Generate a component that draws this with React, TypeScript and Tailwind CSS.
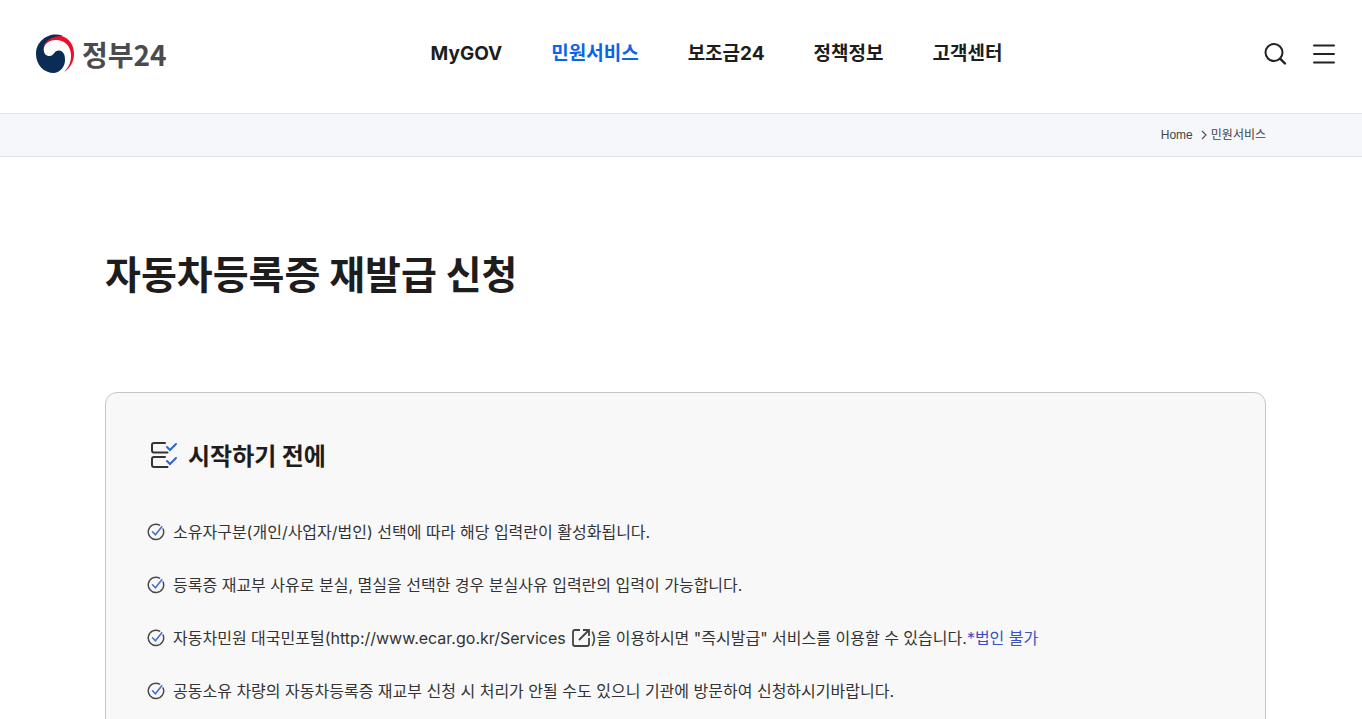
import React from 'react';

interface NavItem {
    label: string;
    active?: boolean;
}

const NAV_ITEMS: NavItem[] = [
    { label: 'MyGOV' },
    { label: '민원서비스', active: true },
    { label: '보조금24' },
    { label: '정책정보' },
    { label: '고객센터' },
];

const Logo: React.FC = () => (
    <a href="#" className="flex items-center gap-2 text-[#4b4b4f] font-['Noto_Sans_CJK_KR',sans-serif]">
        <svg width="38" height="40" viewBox="0 0 38 40" aria-hidden="true">
            <path d="M26 1.5C14 -2.5 0 6 0 20C0 31 8 39 18 39C25 38 29 32 29 26C29 20 27 17 23 16.5C18 16.5 18 22 13.5 22C9 22 7 18 8 13C9 8 16 3 27 4Z" fill="#0b2d55" />
            <path d="M7.5 15C8 7 16 2 25 2C34 4 38 12 38 20C38 28 34 34 28 38C33 33 35.5 27 35 20C34 11 28 6 20 6C14 6 9 9 7.5 15Z" fill="#e8112d" />
        </svg>
        <span className="text-[28px] leading-9 font-bold">정부24</span>
    </a>
);

const Header: React.FC = () => (
    <header className="flex items-center h-[113px] pl-9 pr-[26px] pb-[6px]">
        <Logo />
        <nav className="ml-[264px] flex items-center gap-[49px]">
            {NAV_ITEMS.map(item => (
                <a
                    key={item.label}
                    href="#"
                    className={`text-[19px] leading-7 font-bold whitespace-nowrap ${item.active ? 'text-[#0b64e8]' : 'text-[#1d1d1d]'}`}
                >
                    {item.label}
                </a>
            ))}
        </nav>
        <div className="ml-auto flex items-center gap-6">
            <button type="button" aria-label="검색">
                <svg width="24" height="24" viewBox="0 0 24 24" fill="none" stroke="#222" strokeWidth="2" strokeLinecap="round">
                    <circle cx="10" cy="10.5" r="8.5" />
                    <path d="M16.3 16.8L21 21.5" strokeWidth="2.4" />
                </svg>
            </button>
            <button type="button" aria-label="전체메뉴">
                <svg width="24" height="24" viewBox="0 0 24 24" fill="none" stroke="#222" strokeWidth="2" strokeLinecap="round">
                    <path d="M2 3.5H22M2 12H22M2 20.5H22" />
                </svg>
            </button>
        </div>
    </header>
);

const Breadcrumb: React.FC = () => (
    <nav
        aria-label="breadcrumb"
        className="flex items-center justify-end h-11 pr-24 border-y border-[#dfe2e8] bg-[#f5f7fb] text-[12px] text-[#444] font-['Liberation_Sans','Noto_Sans_CJK_KR',sans-serif]"
    >
        <a href="#">Home</a>
        <svg className="ml-2 mr-1" width="6" height="10" viewBox="0 0 6 10" fill="none" stroke="#555" strokeWidth="1.2">
            <path d="M1 1L5 5L1 9" />
        </svg>
        <a href="#">민원서비스</a>
    </nav>
);

const ChecklistIcon: React.FC = () => (
    <svg width="28" height="28" viewBox="0 0 28 28" fill="none" strokeWidth="2" strokeLinecap="round">
        <path d="M15 2H4Q2 2 2 4V9.5Q2 11.5 4 11.5H17.5" stroke="#333" />
        <path d="M15 16H4Q2 16 2 18V24Q2 26 4 26H17.5" stroke="#333" />
        <path d="M17 6L20 9L26 3M17 20L20 23L26 17" stroke="#2f66cf" />
    </svg>
);

const CheckIcon: React.FC = () => (
    <svg className="shrink-0" width="18" height="18" viewBox="0 0 18 18" fill="none" strokeLinecap="round">
        <path d="M12.6 2.1A7.7 7.7 0 1 0 16.1 6" stroke="#4a4a4a" strokeWidth="1.5" />
        <path d="M5.5 8.8L8.4 11.8L14.8 3.8" stroke="#4272d4" strokeWidth="1.6" />
    </svg>
);

const ExternalIcon: React.FC = () => (
    <svg className="inline-block align-[-3px] ml-[6px] mr-px" width="18" height="18" viewBox="0 0 18 18" fill="none" stroke="#444" strokeWidth="1.8">
        <path d="M8 1H3Q1 1 1 3V15Q1 17 3 17H15Q17 17 17 15V9" />
        <path d="M11 1H17V7M17 1L7 11" />
    </svg>
);

const NOTICES: React.ReactNode[] = [
    '소유자구분(개인/사업자/법인) 선택에 따라 해당 입력란이 활성화됩니다.',
    '등록증 재교부 사유로 분실, 멸실을 선택한 경우 분실사유 입력란의 입력이 가능합니다.',
    <>
        자동차민원 대국민포털(
        <a href="#">
            http://www.ecar.go.kr/Services
            <ExternalIcon />
        </a>
        )을 이용하시면 "즉시발급" 서비스를 이용할 수 있습니다.
        <span className="text-[#3c50c0]">*법인 불가</span>
    </>,
    '공동소유 차량의 자동차등록증 재교부 신청 시 처리가 안될 수도 있으니 기관에 방문하여 신청하시기바랍니다.',
];

export default function App() {
    return (
        <div className="min-h-screen bg-white text-[#1d1d1d] font-['Inter','Noto_Sans_CJK_KR',sans-serif]">
            <Header />
            <Breadcrumb />
            <main className="pl-[105px] pr-24 pt-[87px]">
                <h1 className="text-[39px] leading-[56px] font-bold font-['Noto_Sans_CJK_KR',sans-serif]">
                    자동차등록증 재발급 신청
                </h1>
                <section className="mt-[92px] rounded-xl border border-[#c6c6c6] bg-[#f8f8f8] px-10 pt-11 pb-10">
                    <h2 className="flex items-center gap-[10px] pl-1 text-[24px] leading-9 font-bold font-['Noto_Sans_CJK_KR',sans-serif]">
                        <ChecklistIcon />
                        시작하기 전에
                    </h2>
                    <ul className="mt-[47px] flex flex-col gap-[29px] pl-px text-[16px] leading-6 text-[#333]">
                        {NOTICES.map((notice, i) => (
                            <li key={i} className="flex items-center gap-2">
                                <CheckIcon />
                                <p>{notice}</p>
                            </li>
                        ))}
                    </ul>
                </section>
            </main>
        </div>
    );
}
